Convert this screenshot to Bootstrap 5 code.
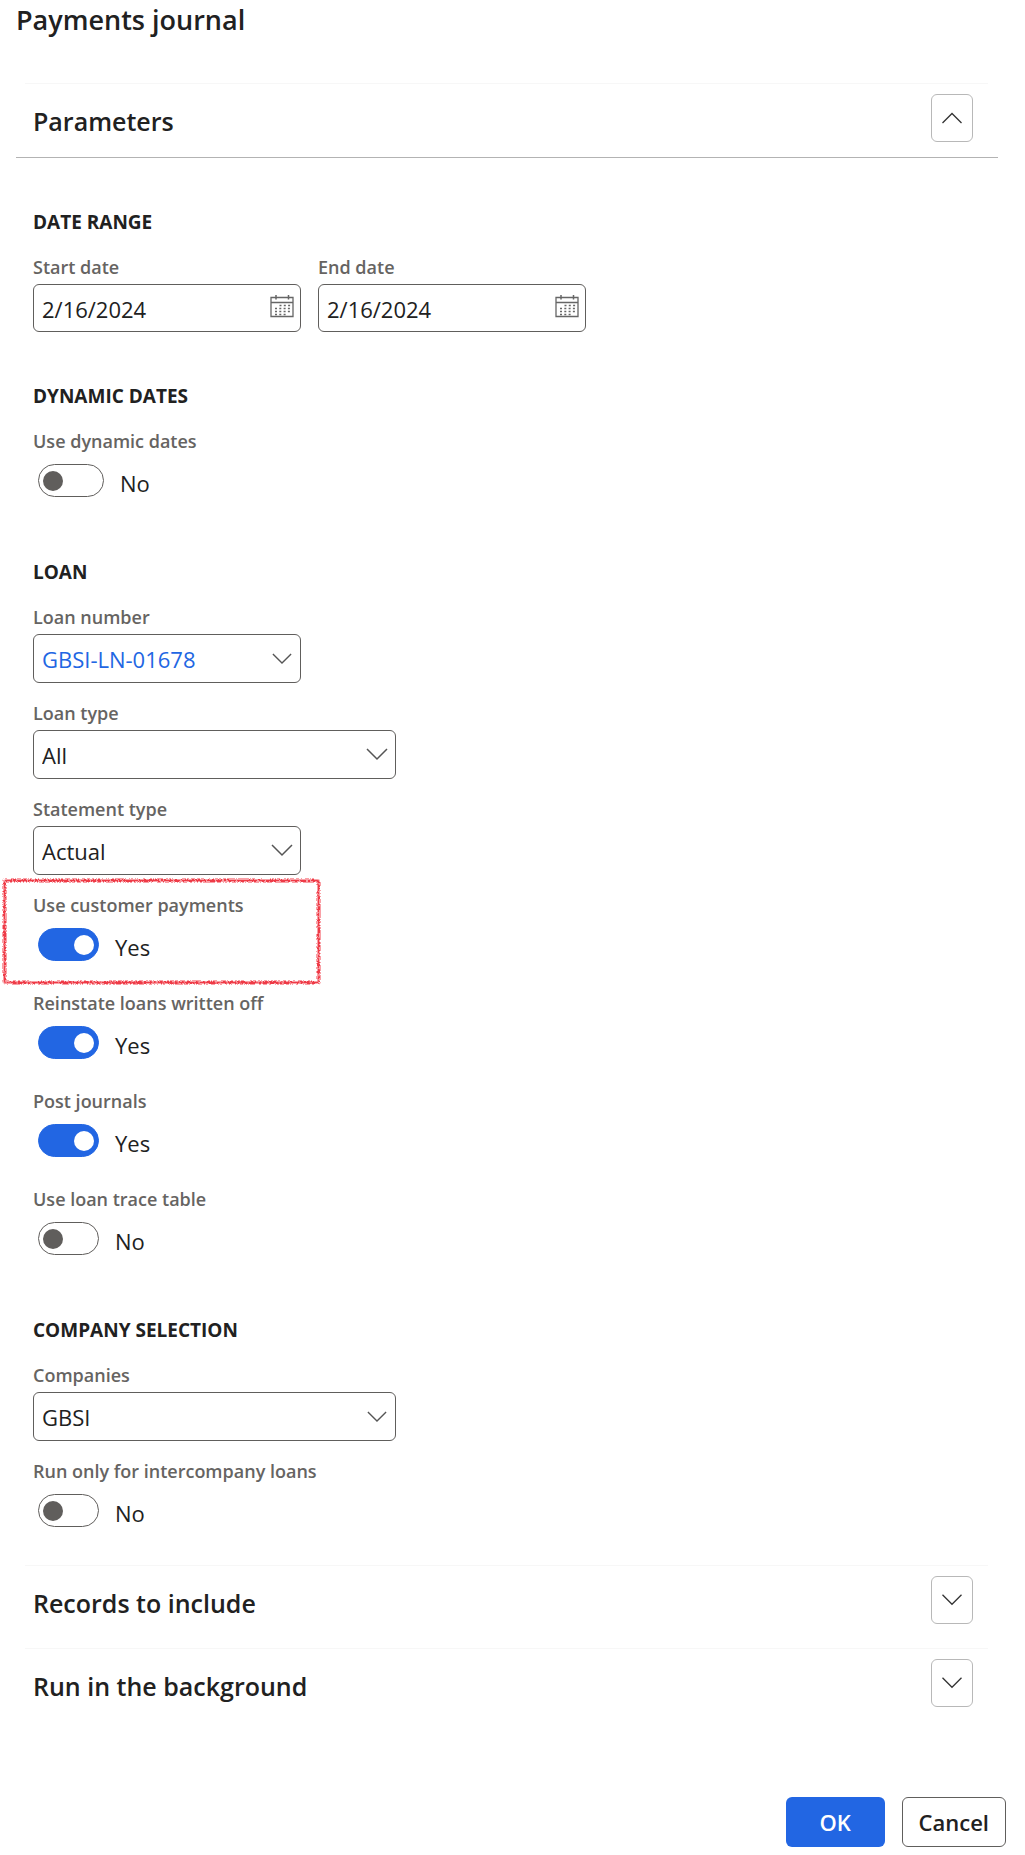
<!DOCTYPE html>
<html lang="en">
<head>
<meta charset="utf-8">
<meta name="viewport" content="width=device-width, initial-scale=1">
<title>Payments journal</title>
<link href="https://cdn.jsdelivr.net/npm/bootstrap@5.3.0/dist/css/bootstrap.min.css" rel="stylesheet">
<style>
  body { font-family: "Open Sans", "Noto Sans", sans-serif; color: #212121; background: #fff; font-size: 22px; }
  .dialog { padding: 0 27px 8px 16px; }
  .dialog-title { font-size: 27px; line-height: 40px; font-weight: 600; margin-bottom: 43px; }
  .group-head { margin: 0 10px 0 9px; padding: 10px 15px 15px 8px; border-top: 1px solid #f7f7f7; }
  .group-title { font-size: 25px; line-height: 32px; font-weight: 600; padding-top: 6px; }
  .group-open { border-bottom: 1px solid #b3b3b3; }
  .group-closed { padding-bottom: 24px; }
  .btn-expand { width: 42px; height: 48px; border: 1px solid #b8b8b8; border-radius: 6px; padding: 0 0 6px; background: #fff; }
  .group-body { padding: 49px 0 38px 17px; }
  .part + .part { margin-top: 60px; }
  .part-dates + .part { margin-top: 49px; }
  .part-title { font-size: 19px; line-height: 28px; font-weight: 700; padding-top: 1px; margin-bottom: 19px; }
  .field-label { display: block; font-size: 18px; line-height: 24px; font-weight: 600; color: #666462; margin-bottom: 5px; }
  .stack { display: flex; flex-direction: column; align-items: flex-start; }
  .field-select { margin-bottom: 18px; }
  .field-switch + .field-switch { margin-top: 30px; }
  .box { border: 1px solid #605e5c; border-radius: 6px; height: 49px; width: 268px; background-color: #fff; }
  .box-wide { width: 363px; }
  .date-row { gap: 17px; }
  .date-box { height: 48px; padding-right: 6px; }
  .date-box input { border: 0; background: none; outline: 0; min-width: 0; padding: 2px 0 0 8px; color: inherit; }
  .date-box button { border: 0; background: none; padding: 0 0 4px; line-height: 0; }
  .pick { font-size: 22px; line-height: 30px; padding: 1px 36px 0 8px; color: #212121;
    background-image: url("data:image/svg+xml,%3Csvg xmlns='http://www.w3.org/2000/svg' viewBox='0 0 22 13'%3E%3Cpath d='M1 1l10 10L21 1' fill='none' stroke='%23555' stroke-width='1.5'/%3E%3C/svg%3E");
    background-size: 22px 13px; background-position: right 7px center; }
  .pick-lookup { background-size: 20px 12px; background-position: right 8px center; }
  .pick-link { color: #2266e3; }
  .switch-row { padding-left: 5px; margin-top: 11px; gap: 16px; }
  .switch-row .switch { float: none; margin: 0; width: 61px; height: 33px; flex: none; border: 1px solid #605e5c; background-color: #fff;
    background-image: url("data:image/svg+xml,%3Csvg xmlns='http://www.w3.org/2000/svg' viewBox='0 0 20 20'%3E%3Ccircle cx='10' cy='10' r='10' fill='%23605e5c'/%3E%3C/svg%3E");
    background-size: 20px 20px; background-position: 4px center; }
  .switch-row .switch:checked { background-color: #2266e3; border-color: #2266e3;
    background-image: url("data:image/svg+xml,%3Csvg xmlns='http://www.w3.org/2000/svg' viewBox='0 0 20 20'%3E%3Ccircle cx='10' cy='10' r='10' fill='%23fff'/%3E%3C/svg%3E");
    background-position: right 4px center; }
  .switch-row .switch-long { width: 66px; }
  .switch-row span { padding-top: 5px; line-height: 28px; }
  .marker { position: absolute; left: -32px; top: -16px; width: 320px; height: 109px; pointer-events: none; }
  .footer-bar { margin: 90px -8px 0 0; gap: 17px; }
  .footer-bar .btn { height: 50px; border-radius: 6px; font-size: 22px; font-weight: 600; padding: 0 16px; }
  .btn-ok { min-width: 99px; background: #2266e3; color: #fff; border: 0; }
  .btn-cancel { min-width: 104px; background: #fff; border: 1px solid #605e5c; color: #212121; }
</style>
<script src="https://cdn.jsdelivr.net/npm/bootstrap@5.3.0/dist/js/bootstrap.bundle.min.js"></script>
</head>
<body>
<svg width="0" height="0" class="position-absolute" aria-hidden="true">
  <defs>
    <symbol id="calendar" viewBox="0 0 24 23">
      <path d="M1 2.500h22v19H1zM1 7.500h22" fill="none" stroke="#666" stroke-width="1.300"/>
      <path d="M6 0v4.500M18.500 0v4.500" stroke="#666" stroke-width="1.500"/>
      <path d="M9.500 10.500h12M5 13.500h16M5 16.500h16M5 19.500h12" stroke="#666" stroke-width="1.500" stroke-dasharray="2 2.300"/>
    </symbol>
    <symbol id="down" viewBox="0 0 20 12"><path d="M.5.8L10 10.300 19.500.8" fill="none" stroke="#333" stroke-width="1.300"/></symbol>
    <symbol id="up" viewBox="0 0 20 12"><path d="M.5 11L10 1.500 19.500 11" fill="none" stroke="#333" stroke-width="1.300"/></symbol>
  </defs>
</svg>
<form class="dialog">
  <h1 class="dialog-title">Payments journal</h1>

  <div class="group-head d-flex justify-content-between align-items-center">
    <h2 class="group-title mb-0">Parameters</h2>
    <button type="button" class="btn-expand" aria-label="Collapse Parameters"><svg width="20" height="12"><use href="#up"/></svg></button>
  </div>
  <div class="group-open"></div>

  <div class="group-body">
    <section class="part part-dates">
      <h3 class="part-title">DATE RANGE</h3>
      <div class="date-row d-flex flex-wrap">
        <div>
          <label class="field-label" for="start">Start date</label>
          <div class="box date-box d-flex align-items-center">
            <input class="flex-grow-1" id="start" type="text" value="2/16/2024">
            <button type="button" aria-label="Choose start date"><svg width="24" height="23"><use href="#calendar"/></svg></button>
          </div>
        </div>
        <div>
          <label class="field-label" for="end">End date</label>
          <div class="box date-box d-flex align-items-center">
            <input class="flex-grow-1" id="end" type="text" value="2/16/2024">
            <button type="button" aria-label="Choose end date"><svg width="24" height="23"><use href="#calendar"/></svg></button>
          </div>
        </div>
      </div>
    </section>

    <section class="part">
      <h3 class="part-title">DYNAMIC DATES</h3>
      <div class="field-switch">
        <label class="field-label" for="dynamic">Use dynamic dates</label>
        <div class="form-switch switch-row d-flex"><input class="form-check-input switch switch-long" type="checkbox" role="switch" id="dynamic"><span>No</span></div>
      </div>
    </section>

    <section class="part">
      <h3 class="part-title">LOAN</h3>
      <div class="stack">
        <div class="field-select">
          <label class="field-label" for="number">Loan number</label>
          <select class="form-select box pick pick-lookup pick-link" id="number"><option>GBSI-LN-01678</option></select>
        </div>
        <div class="field-select">
          <label class="field-label" for="type">Loan type</label>
          <select class="form-select box box-wide pick" id="type"><option>All</option></select>
        </div>
        <div class="field-select">
          <label class="field-label" for="statement">Statement type</label>
          <select class="form-select box pick" id="statement"><option>Actual</option></select>
        </div>
        <div class="field-switch position-relative">
          <svg class="marker" aria-hidden="true">
            <defs><filter id="rough"><feTurbulence baseFrequency=".35" numOctaves="2" seed="4"/><feDisplacementMap in="SourceGraphic" scale="2"/></filter></defs>
            <g fill="none" filter="url(#rough)">
              <rect x="3" y="3" width="314" height="102" rx="2" stroke="#f9a0a6" stroke-width="4"/>
              <rect x="3" y="3" width="314" height="102" rx="2" stroke="#ee3a46" stroke-width="2" stroke-dasharray="6 1 3 1 9 1"/>
            </g>
          </svg>
          <label class="field-label" for="customer">Use customer payments</label>
          <div class="form-switch switch-row d-flex"><input class="form-check-input switch" type="checkbox" role="switch" id="customer" checked><span>Yes</span></div>
        </div>
        <div class="field-switch">
          <label class="field-label" for="reinstate">Reinstate loans written off</label>
          <div class="form-switch switch-row d-flex"><input class="form-check-input switch" type="checkbox" role="switch" id="reinstate" checked><span>Yes</span></div>
        </div>
        <div class="field-switch">
          <label class="field-label" for="post">Post journals</label>
          <div class="form-switch switch-row d-flex"><input class="form-check-input switch" type="checkbox" role="switch" id="post" checked><span>Yes</span></div>
        </div>
        <div class="field-switch">
          <label class="field-label" for="trace">Use loan trace table</label>
          <div class="form-switch switch-row d-flex"><input class="form-check-input switch" type="checkbox" role="switch" id="trace"><span>No</span></div>
        </div>
      </div>
    </section>

    <section class="part">
      <h3 class="part-title">COMPANY SELECTION</h3>
      <div class="stack">
        <div class="field-select">
          <label class="field-label" for="companies">Companies</label>
          <select class="form-select box box-wide pick pick-lookup" id="companies"><option>GBSI</option></select>
        </div>
        <div class="field-switch">
          <label class="field-label" for="intercompany">Run only for intercompany loans</label>
          <div class="form-switch switch-row d-flex"><input class="form-check-input switch" type="checkbox" role="switch" id="intercompany"><span>No</span></div>
        </div>
      </div>
    </section>
  </div>

  <div class="group-head group-closed d-flex justify-content-between align-items-center">
    <h2 class="group-title mb-0">Records to include</h2>
    <button type="button" class="btn-expand" aria-label="Expand Records to include"><svg width="20" height="12"><use href="#down"/></svg></button>
  </div>
  <div class="group-head d-flex justify-content-between align-items-center pb-0">
    <h2 class="group-title mb-0">Run in the background</h2>
    <button type="button" class="btn-expand" aria-label="Expand Run in the background"><svg width="20" height="12"><use href="#down"/></svg></button>
  </div>

  <div class="footer-bar d-flex justify-content-end">
    <button type="submit" class="btn btn-ok">OK</button>
    <button type="button" class="btn btn-cancel">Cancel</button>
  </div>
</form>
</body>
</html>
